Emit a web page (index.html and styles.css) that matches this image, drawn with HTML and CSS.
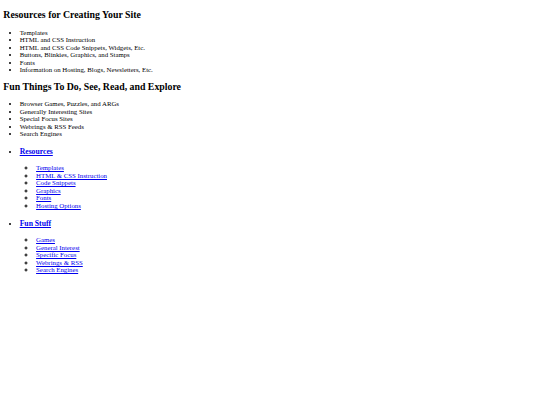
FILE: index.html
```html
<!DOCTYPE html>
<html lang="en">
<head>
<meta charset="utf-8">
<title>Resources</title>
<link rel="stylesheet" href="styles.css">
</head>
<body>
<h2 class="section-title">Resources for Creating Your Site</h2>
<ul class="plain-list">
  <li>Templates</li>
  <li>HTML and CSS Instruction</li>
  <li>HTML and CSS Code Snippets, Widgets, Etc.</li>
  <li>Buttons, Blinkies, Graphics, and Stamps</li>
  <li>Fonts</li>
  <li>Information on Hosting, Blogs, Newsletters, Etc.</li>
</ul>
<h2 class="section-title">Fun Things To Do, See, Read, and Explore</h2>
<ul class="plain-list">
  <li>Browser Games, Puzzles, and ARGs</li>
  <li>Generally Interesting Sites</li>
  <li>Special Focus Sites</li>
  <li>Webrings &amp; RSS Feeds</li>
  <li>Search Engines</li>
</ul>
<ul class="nav-list">
  <li class="nav-group">
    <h3 class="nav-head"><a href="#">Resources</a></h3>
    <ul class="sub-list">
      <li><a href="#">Templates</a></li>
      <li><a href="#">HTML &amp; CSS Instruction</a></li>
      <li><a href="#">Code Snippets</a></li>
      <li><a href="#">Graphics</a></li>
      <li><a href="#">Fonts</a></li>
      <li><a href="#">Hosting Options</a></li>
    </ul>
  </li>
  <li class="nav-group">
    <h3 class="nav-head"><a href="#">Fun Stuff</a></h3>
    <ul class="sub-list">
      <li><a href="#">Games</a></li>
      <li><a href="#">General Interest</a></li>
      <li><a href="#">Specific Focus</a></li>
      <li><a href="#">Webrings &amp; RSS</a></li>
      <li><a href="#">Search Engines</a></li>
    </ul>
  </li>
</ul>
</body>
</html>
```
FILE: styles.css
```css
html, body {
  background: #ffffff;
}
body {
  margin: 3.3px;
  font-family: "Liberation Serif", "Times New Roman", serif;
  font-size: 6.8px;
  line-height: 7.5px;
  color: #000000;
}
a {
  color: #0000ee;
}
.section-title {
  font-size: 9.84px;
  line-height: 11.3px;
  font-weight: bold;
  margin: 6.2px 0 8.2px;
}
.section-title + .plain-list {
  margin-top: 8.2px;
}
.plain-list {
  margin: 6.55px 0;
  padding-left: 16.4px;
  list-style: disc;
}
.nav-list {
  margin: 6.55px 0;
  padding-left: 16.4px;
  list-style: disc;
}
.nav-head {
  font-size: 7.68px;
  line-height: 8.8px;
  font-weight: bold;
  margin: 10.9px 0 7.3px;
}
.sub-list {
  margin: 0;
  padding-left: 16.4px;
  list-style: circle;
}
```
